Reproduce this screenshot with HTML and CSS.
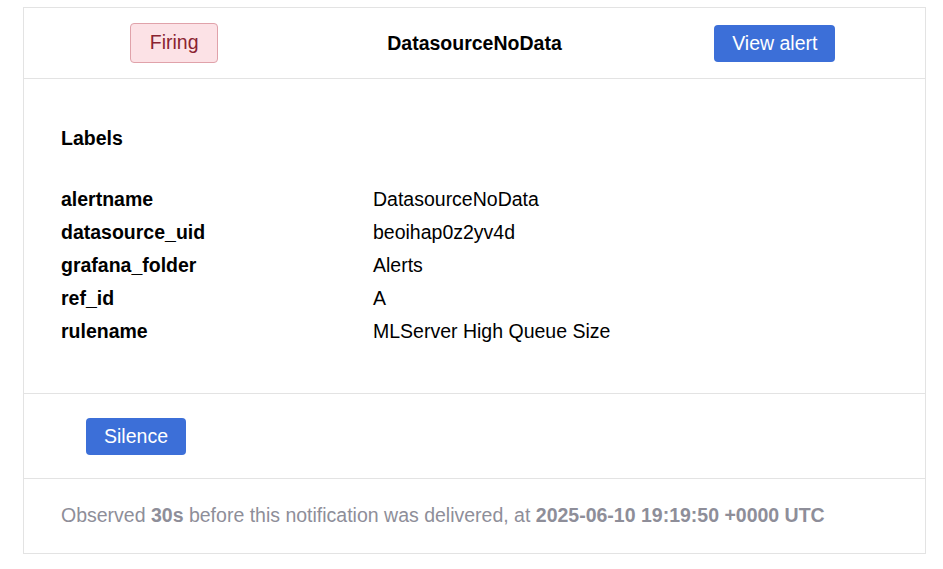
FILE: index.html
```html
<!DOCTYPE html>
<html>
<head>
<meta charset="utf-8">
<link rel="stylesheet" href="styles.css">
</head>
<body>
<div class="card">
  <div class="header">
    <div class="cell"><span class="badge">Firing</span></div>
    <div class="cell"><span class="title">DatasourceNoData</span></div>
    <div class="cell"><a class="btn">View alert</a></div>
  </div>
  <div class="body">
    <div class="heading">Labels</div>
    <div class="labels">
      <div class="key">alertname</div><div class="val">DatasourceNoData</div>
      <div class="key">datasource_uid</div><div class="val">beoihap0z2yv4d</div>
      <div class="key">grafana_folder</div><div class="val">Alerts</div>
      <div class="key">ref_id</div><div class="val">A</div>
      <div class="key">rulename</div><div class="val">MLServer High Queue Size</div>
    </div>
  </div>
  <div class="actions">
    <a class="btn">Silence</a>
  </div>
  <div class="footer">
    Observed <b>30s</b> before this notification was delivered, at <b>2025-06-10 19:19:50 +0000 UTC</b>
  </div>
</div>
</body>
</html>
```
FILE: styles.css
```css
html, body {
  margin: 0;
  padding: 0;
  background: #ffffff;
}
body {
  font-family: "Liberation Sans", Arial, sans-serif;
  font-size: 19.5px;
  color: #000;
  padding-top: 7px;
}
.card {
  margin-left: 23px;
  width: 901px;
  border: 1px solid #e3e3e3;
}
.header {
  display: grid;
  grid-template-columns: 1fr 1fr 1fr;
  height: 70px;
  border-bottom: 1px solid #e3e3e3;
}
.cell {
  display: flex;
  align-items: center;
  justify-content: center;
}
.badge {
  display: flex;
  align-items: center;
  justify-content: center;
  box-sizing: border-box;
  width: 88px;
  height: 40px;
  margin-top: -1px;
  background: #fce2e6;
  border: 1px solid #e0a2aa;
  border-radius: 4px;
  color: #8a2331;
}
.title {
  font-weight: bold;
}
.btn {
  display: inline-flex;
  align-items: center;
  justify-content: center;
  height: 37px;
  padding: 0 18px;
  background: #3c6fd8;
  color: #fff;
  border-radius: 4px;
  text-decoration: none;
}
.body {
  padding: 43px 0 45px 37px;
  border-bottom: 1px solid #e3e3e3;
}
.heading {
  font-weight: bold;
  line-height: 33px;
  margin-bottom: 28px;
}
.labels {
  display: grid;
  grid-template-columns: 312px 1fr;
  line-height: 33px;
}
.key {
  font-weight: bold;
}
.actions {
  height: 84px;
  display: flex;
  align-items: center;
  padding-left: 62px;
  border-bottom: 1px solid #e3e3e3;
}
.actions .btn {
  width: 100px;
  padding: 0;
}
.footer {
  padding: 25px 0 27px 37px;
  line-height: 22px;
  color: #8e8e99;
}
.footer b {
  font-weight: bold;
}
```
